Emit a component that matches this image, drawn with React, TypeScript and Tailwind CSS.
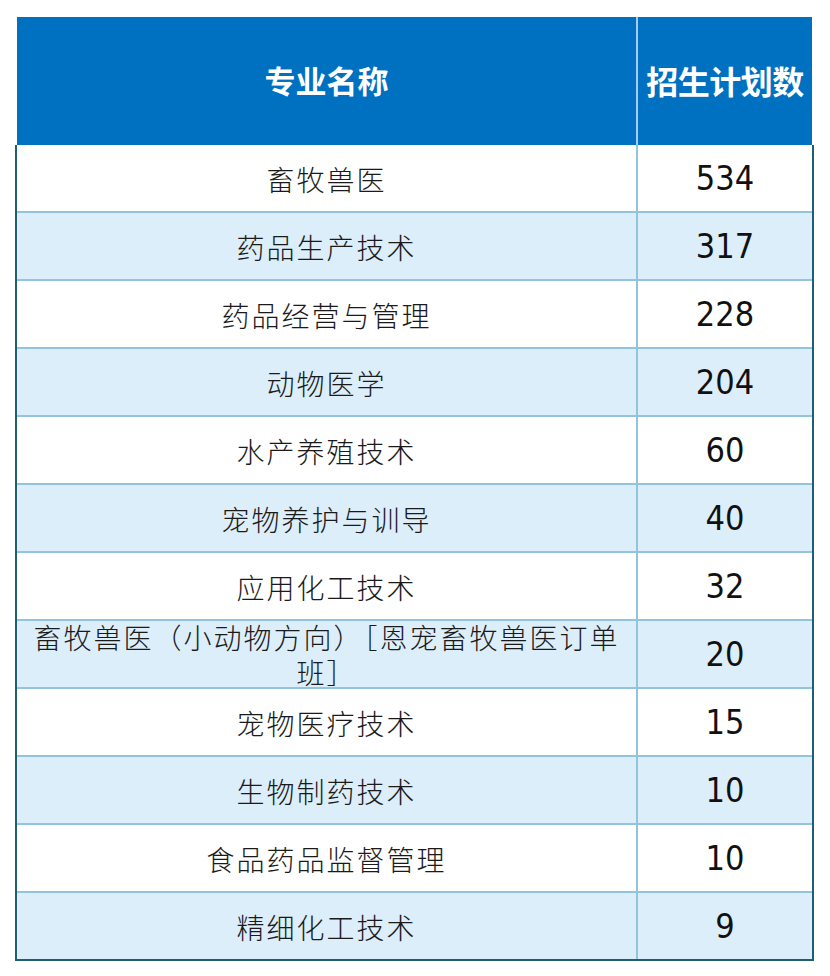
const rows: { name: string; count: number }[] = [
  { name: "畜牧兽医", count: 534 },
  { name: "药品生产技术", count: 317 },
  { name: "药品经营与管理", count: 228 },
  { name: "动物医学", count: 204 },
  { name: "水产养殖技术", count: 60 },
  { name: "宠物养护与训导", count: 40 },
  { name: "应用化工技术", count: 32 },
  { name: "畜牧兽医（小动物方向）［恩宠畜牧兽医订单班］", count: 20 },
  { name: "宠物医疗技术", count: 15 },
  { name: "生物制药技术", count: 10 },
  { name: "食品药品监督管理", count: 10 },
  { name: "精细化工技术", count: 9 },
];

const cjk = "font-['Noto_Sans_CJK_SC','Noto_Sans',sans-serif]";
const num = "font-['DejaVu_Sans_Condensed','Liberation_Sans_Narrow','Roboto',sans-serif]";

export default function App() {
  return (
    <div className="min-h-[976px] w-[830px] bg-white pt-[17px] pl-[15px]">
      <div className="w-[799px]">
        <div className={`mx-[2px] flex h-[128px] bg-[#0070c0] text-white ${cjk}`}>
          <div className="flex w-[619px] items-center justify-center pb-[2px] text-[31px] font-bold">
            专业名称
          </div>
          <div className="flex flex-1 items-center justify-center border-l-2 border-[#a6cbea] pb-[2px] text-[32px] font-bold tracking-[-0.5px]">
            招生计划数
          </div>
        </div>
        <div className="border-x-2 border-b-2 border-[#1f5e73]">
          {rows.map((r, i) => (
            <div
              key={r.name}
              className={`flex ${i < rows.length - 1 ? "h-[68px] border-b-2 border-[#93c4dd]" : "h-[66px]"} ${
                i % 2 === 1 ? "bg-[#ddeefb]" : "bg-white"
              }`}
            >
              <div
                className={`flex w-[619px] items-center justify-center px-[9px] pt-[2px] text-center text-[28px] leading-[35px] font-light tracking-[2px] text-[#1a1a1a] ${cjk}`}
              >
                {r.name}
              </div>
              <div
                className={`flex flex-1 items-center justify-center border-l-2 border-[#93c4dd] text-[34px] text-[#111] ${num}`}
              >
                {r.count}
              </div>
            </div>
          ))}
        </div>
      </div>
    </div>
  );
}
